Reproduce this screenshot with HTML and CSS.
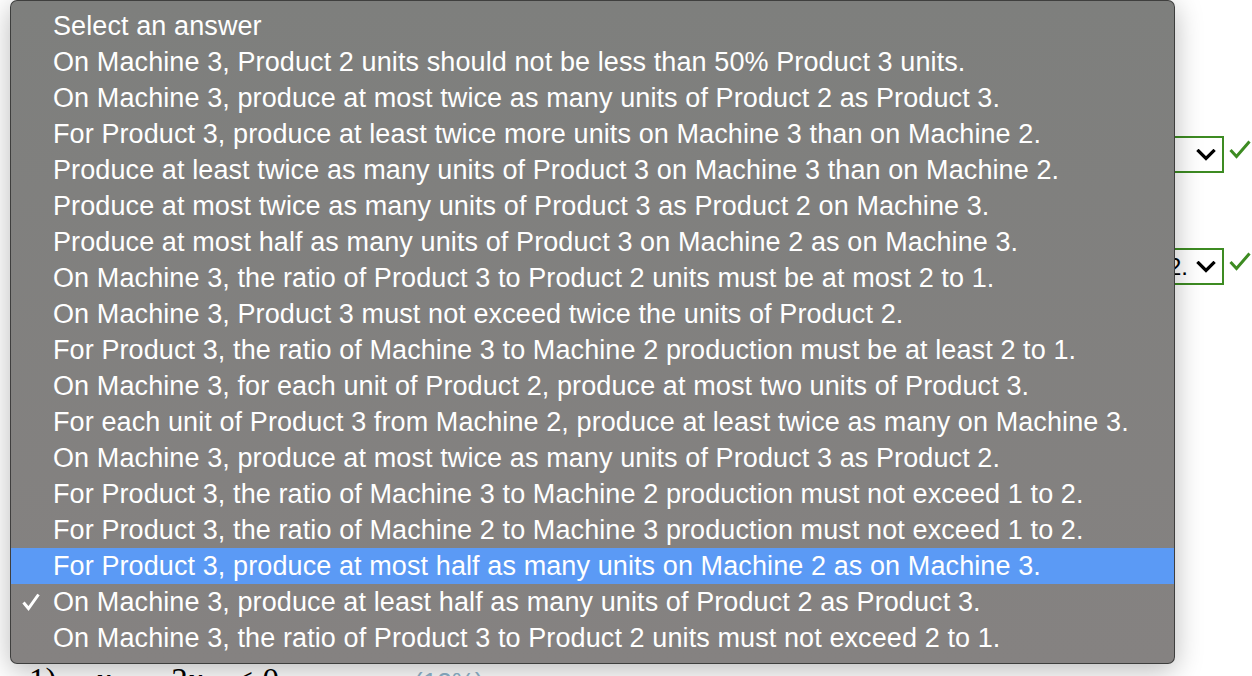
FILE: index.html
```html
<!DOCTYPE html>
<html>
<head>
<meta charset="utf-8">
<link rel="stylesheet" href="styles.css">
</head>
<body>
<div class="page">
  <div class="field-row first">
    <div class="select"><span class="sel-text"></span>
      <svg class="chev" width="20" height="12" viewBox="0 0 20 12"><path d="M2.5 2 L10 9.5 L17.5 2" fill="none" stroke="#000" stroke-width="3.2" stroke-linecap="square"/></svg>
    </div>
    <svg class="ok" width="22" height="20" viewBox="0 0 22 20"><path d="M1.5 10 L7.5 16.5 L20.5 1.5" fill="none" stroke="#3d8b22" stroke-width="3"/></svg>
  </div>
  <div class="field-row second">
    <div class="select"><span class="sel-text">On Machine 2.</span>
      <svg class="chev" width="20" height="12" viewBox="0 0 20 12"><path d="M2.5 2 L10 9.5 L17.5 2" fill="none" stroke="#000" stroke-width="3.2" stroke-linecap="square"/></svg>
    </div>
    <svg class="ok" width="22" height="20" viewBox="0 0 22 20"><path d="M1.5 10 L7.5 16.5 L20.5 1.5" fill="none" stroke="#3d8b22" stroke-width="3"/></svg>
  </div>
  <div class="math-line">
    <span class="num">1)</span>
    <span class="expr"><i>x</i><sub>22</sub><span class="op">−</span>2<i>x</i><sub>32</sub><span class="op">≤</span>0</span>
    <span class="pct">(12%)</span>
  </div>
</div>

<div class="menu">
  <div class="item">Select an answer</div>
  <div class="item">On Machine 3, Product 2 units should not be less than 50% Product 3 units.</div>
  <div class="item">On Machine 3, produce at most twice as many units of Product 2 as Product 3.</div>
  <div class="item">For Product 3, produce at least twice more units on Machine 3 than on Machine 2.</div>
  <div class="item">Produce at least twice as many units of Product 3 on Machine 3 than on Machine 2.</div>
  <div class="item">Produce at most twice as many units of Product 3 as Product 2 on Machine 3.</div>
  <div class="item">Produce at most half as many units of Product 3 on Machine 2 as on Machine 3.</div>
  <div class="item">On Machine 3, the ratio of Product 3 to Product 2 units must be at most 2 to 1.</div>
  <div class="item">On Machine 3, Product 3 must not exceed twice the units of Product 2.</div>
  <div class="item">For Product 3, the ratio of Machine 3 to Machine 2 production must be at least 2 to 1.</div>
  <div class="item">On Machine 3, for each unit of Product 2, produce at most two units of Product 3.</div>
  <div class="item">For each unit of Product 3 from Machine 2, produce at least twice as many on Machine 3.</div>
  <div class="item">On Machine 3, produce at most twice as many units of Product 3 as Product 2.</div>
  <div class="item">For Product 3, the ratio of Machine 3 to Machine 2 production must not exceed 1 to 2.</div>
  <div class="item">For Product 3, the ratio of Machine 2 to Machine 3 production must not exceed 1 to 2.</div>
  <div class="item active">For Product 3, produce at most half as many units on Machine 2 as on Machine 3.</div>
  <div class="item checked"><svg class="tick" width="18" height="18" viewBox="0 0 18 18"><path d="M1.5 9.5 L6.5 15.5 L16.5 1.5" fill="none" stroke="#fff" stroke-width="3"/></svg>On Machine 3, produce at least half as many units of Product 2 as Product 3.</div>
  <div class="item">On Machine 3, the ratio of Product 3 to Product 2 units must not exceed 2 to 1.</div>
</div>
</body>
</html>
```

FILE: styles.css
```css
html, body {
  margin: 0;
  padding: 0;
  background: #ffffff;
  width: 1252px;
  height: 676px;
  overflow: hidden;
  font-family: "Liberation Sans", Arial, sans-serif;
}

.page {
  position: relative;
  height: 676px;
  overflow: hidden;
}

.field-row {
  display: flex;
  justify-content: flex-end;
  align-items: flex-start;
  padding-right: 1px;
  gap: 5px;
}

.field-row.first {
  margin-top: 136px;
}

.field-row.second {
  margin-top: 75px;
}

.select {
  width: 220px;
  height: 37px;
  box-sizing: border-box;
  border: 2px solid #3d8b22;
  display: flex;
  align-items: center;
  justify-content: flex-end;
  padding-right: 6px;
  gap: 8px;
  font-size: 24px;
  color: #000;
  white-space: nowrap;
  overflow: hidden;
}

.sel-text {
  line-height: 30px;
}

.chev {
  display: block;
  flex: none;
}

.ok {
  display: block;
  margin-top: 4px;
}

.math-line {
  margin-top: 377px;
  display: flex;
  align-items: baseline;
  font-family: "Liberation Serif", "Times New Roman", serif;
  font-size: 33px;
  line-height: 36px;
  color: #000;
}

.math-line .num {
  margin-left: 29px;
  width: 67px;
}

.math-line .expr sub {
  font-size: 22px;
}

.math-line .op {
  padding: 0 10px;
}

.math-line .pct {
  margin-left: 135px;
  color: #8fb4cc;
  font-family: "Liberation Sans", Arial, sans-serif;
  font-size: 26px;
}

.menu {
  position: absolute;
  left: 10px;
  top: 0;
  width: 1165px;
  height: 664px;
  box-sizing: border-box;
  padding: 7px 0 9px;
  background: linear-gradient(#7e7f7d, #858281);
  border: 1px solid rgba(40, 40, 40, 0.75);
  border-radius: 7px;
  box-shadow: 0 6px 28px rgba(0, 0, 0, 0.28);
  overflow: hidden;
}

.item {
  position: relative;
  height: 36px;
  line-height: 36px;
  padding-left: 42px;
  color: #ffffff;
  font-size: 27px;
  letter-spacing: 0.1px;
  white-space: nowrap;
}

.item.active {
  background: #5b9af5;
}

.tick {
  position: absolute;
  left: 11px;
  top: 9px;
}
```
